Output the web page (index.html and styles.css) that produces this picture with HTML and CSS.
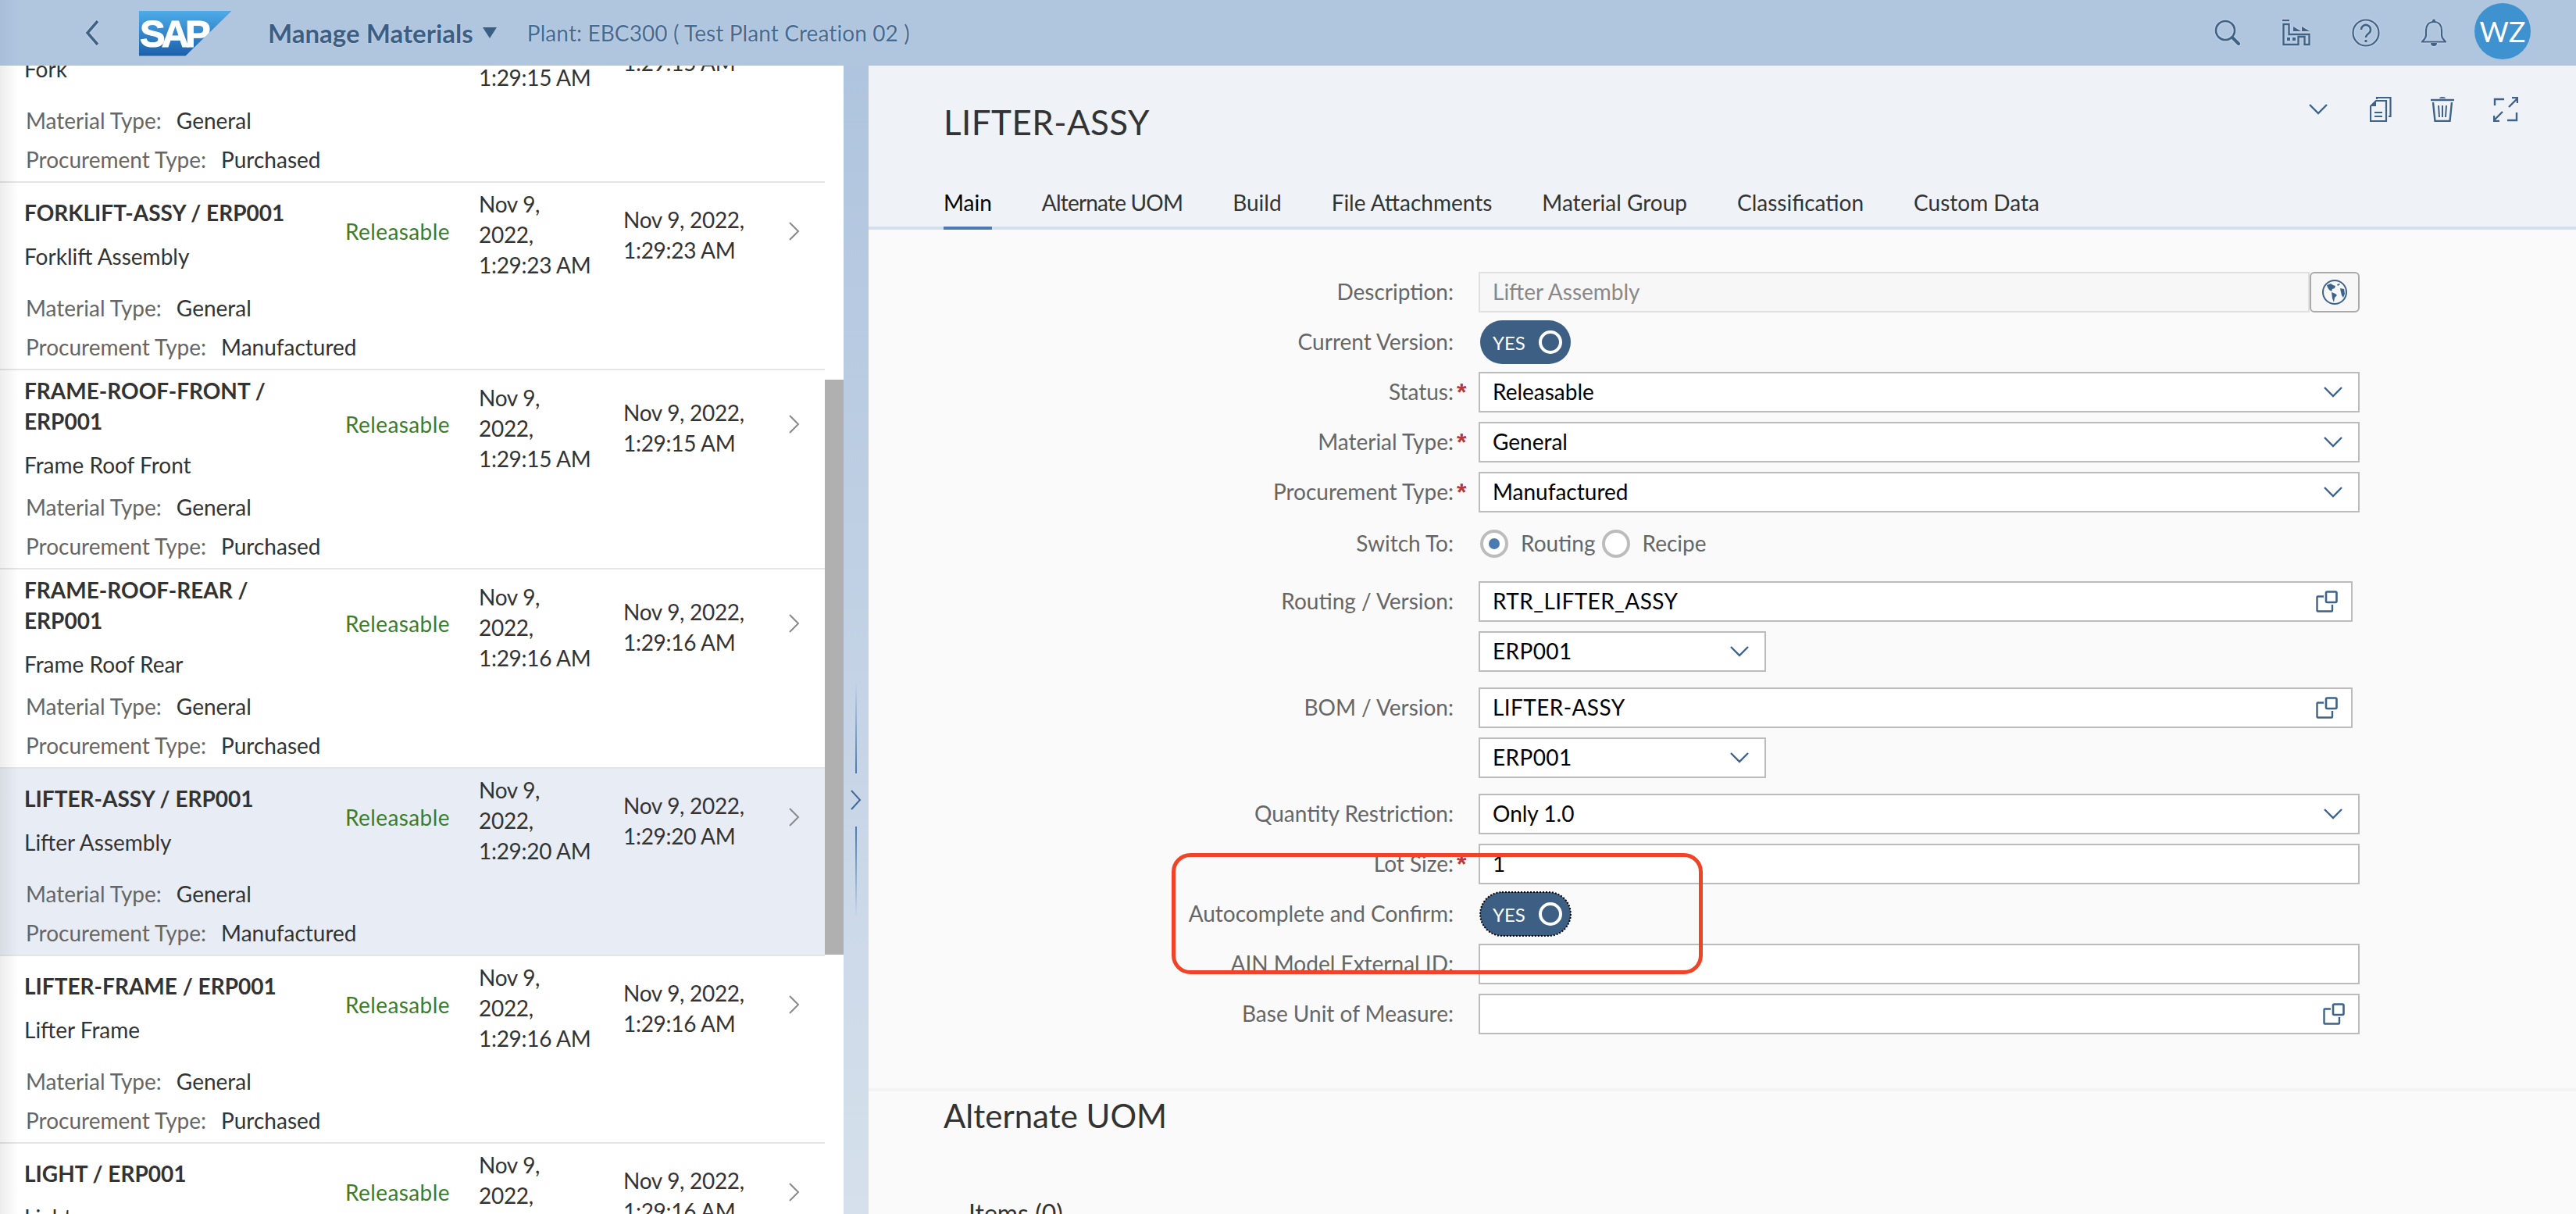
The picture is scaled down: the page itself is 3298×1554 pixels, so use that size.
FILE: index.html
```html
<!DOCTYPE html>
<html>
<head>
    <title>Manage Materials</title>
    <meta name="viewport" content="width=device-width, initial-scale=1.0">
    <link rel="stylesheet" href="styles.css">
</head>
<body>
    <svg class="defs" width="0" height="0">
        <symbol id="chev-down" viewBox="0 0 24 14"><path d="M1 1l11 11L23 1" fill="none" stroke="#3d638b" stroke-width="2.4"/></symbol>
        <symbol id="chev-right" viewBox="0 0 14 24"><path d="M1 1l11 11L1 23" fill="none" stroke="#8a8a8a" stroke-width="2"/></symbol>
        <symbol id="value-help" viewBox="0 0 28 28"><rect x="13" y="1.5" width="13.5" height="13.5" rx="1.5" fill="none" stroke="#3d638b" stroke-width="2.6"/><path d="M10 7.5H2.5a1 1 0 0 0-1 1V25.5a1 1 0 0 0 1 1H20a1 1 0 0 0 1-1V18" fill="none" stroke="#3d638b" stroke-width="2.4"/></symbol>
    </svg>

    <header class="shell">
        <svg class="back" width="20" height="32" viewBox="0 0 20 32"><path d="M17 1L4 16l13 15" fill="none" stroke="#3f6287" stroke-width="3.6"/></svg>
        <div class="logo"><span>SAP</span></div>
        <div class="app-title">Manage Materials</div>
        <div class="caret"></div>
        <div class="plant">Plant: EBC300 ( Test Plant Creation 02 )</div>
        <div class="shell-icons">
            <svg width="34" height="34" viewBox="0 0 34 34"><circle cx="14" cy="14" r="12" fill="none" stroke="#3f6287" stroke-width="2.6"/><path d="M23 23l8 8" stroke="#3f6287" stroke-width="4" stroke-linecap="round"/></svg>
            <svg width="36" height="34" viewBox="0 0 36 34"><path d="M0 1h9" stroke="#3f6287" stroke-width="2.4"/><path d="M1.5 6h7v13h26v13h-6V22h-8v10H1.5z" fill="none" stroke="#3f6287" stroke-width="2.4"/><path d="M14 9l10 6H14zM25 9l10 6H25z" fill="#3f6287"/><path d="M6 23h4v4H6zM13 23h4v4h-4z" fill="#3f6287"/></svg>
            <svg width="36" height="36" viewBox="0 0 36 36"><circle cx="18" cy="18" r="16.5" fill="none" stroke="#3f6287" stroke-width="2.2"/><path d="M12 14a6 6 0 1 1 9.5 4.8c-2 1.5-3.5 2.5-3.5 5.2" fill="none" stroke="#3f6287" stroke-width="2.6"/><circle cx="18" cy="28.5" r="1.8" fill="#3f6287"/></svg>
            <svg width="32" height="36" viewBox="0 0 32 36"><path d="M16 4c-7 0-10 5-10 11v6c0 4-3 6-5 8.5h30c-2-2.500-5-4.500-5-8.500v-6c0-6-3-11-10-11z" fill="none" stroke="#3f6287" stroke-width="2.2"/><circle cx="16" cy="2.5" r="2" fill="#3f6287"/><path d="M12 31h8a4 4 0 0 1-8 0z" fill="#3f6287"/></svg>
        </div>
        <div class="avatar">WZ</div>
    </header>

    <main class="layout">
        <section class="list">
            <div class="list-inner">
                <div class="row">
                    <div class="row-top">
                        <div class="cell-title"><div class="mat-id">FORK / ERP001</div><div class="mat-desc">Fork</div></div>
                        <div class="status">Releasable</div>
                        <div class="date">Nov 9,<br>2022,<br>1:29:15 AM</div>
                        <div class="date">Nov 9, 2022,<br>1:29:15 AM</div>
                        <svg class="row-chev" width="14" height="24"><use href="#chev-right"/></svg>
                    </div>
                    <div class="attr"><span class="attr-label">Material Type:</span>General</div>
                    <div class="attr"><span class="attr-label">Procurement Type:</span>Purchased</div>
                </div>
                <div class="row">
                    <div class="row-top">
                        <div class="cell-title"><div class="mat-id">FORKLIFT-ASSY / ERP001</div><div class="mat-desc">Forklift Assembly</div></div>
                        <div class="status">Releasable</div>
                        <div class="date">Nov 9,<br>2022,<br>1:29:23 AM</div>
                        <div class="date">Nov 9, 2022,<br>1:29:23 AM</div>
                        <svg class="row-chev" width="14" height="24"><use href="#chev-right"/></svg>
                    </div>
                    <div class="attr"><span class="attr-label">Material Type:</span>General</div>
                    <div class="attr"><span class="attr-label">Procurement Type:</span>Manufactured</div>
                </div>
                <div class="row tall">
                    <div class="row-top">
                        <div class="cell-title"><div class="mat-id">FRAME-ROOF-FRONT /<br>ERP001</div><div class="mat-desc">Frame Roof Front</div></div>
                        <div class="status">Releasable</div>
                        <div class="date">Nov 9,<br>2022,<br>1:29:15 AM</div>
                        <div class="date">Nov 9, 2022,<br>1:29:15 AM</div>
                        <svg class="row-chev" width="14" height="24"><use href="#chev-right"/></svg>
                    </div>
                    <div class="attr"><span class="attr-label">Material Type:</span>General</div>
                    <div class="attr"><span class="attr-label">Procurement Type:</span>Purchased</div>
                </div>
                <div class="row tall">
                    <div class="row-top">
                        <div class="cell-title"><div class="mat-id">FRAME-ROOF-REAR /<br>ERP001</div><div class="mat-desc">Frame Roof Rear</div></div>
                        <div class="status">Releasable</div>
                        <div class="date">Nov 9,<br>2022,<br>1:29:16 AM</div>
                        <div class="date">Nov 9, 2022,<br>1:29:16 AM</div>
                        <svg class="row-chev" width="14" height="24"><use href="#chev-right"/></svg>
                    </div>
                    <div class="attr"><span class="attr-label">Material Type:</span>General</div>
                    <div class="attr"><span class="attr-label">Procurement Type:</span>Purchased</div>
                </div>
                <div class="row selected">
                    <div class="row-top">
                        <div class="cell-title"><div class="mat-id">LIFTER-ASSY / ERP001</div><div class="mat-desc">Lifter Assembly</div></div>
                        <div class="status">Releasable</div>
                        <div class="date">Nov 9,<br>2022,<br>1:29:20 AM</div>
                        <div class="date">Nov 9, 2022,<br>1:29:20 AM</div>
                        <svg class="row-chev" width="14" height="24"><use href="#chev-right"/></svg>
                    </div>
                    <div class="attr"><span class="attr-label">Material Type:</span>General</div>
                    <div class="attr"><span class="attr-label">Procurement Type:</span>Manufactured</div>
                </div>
                <div class="row">
                    <div class="row-top">
                        <div class="cell-title"><div class="mat-id">LIFTER-FRAME / ERP001</div><div class="mat-desc">Lifter Frame</div></div>
                        <div class="status">Releasable</div>
                        <div class="date">Nov 9,<br>2022,<br>1:29:16 AM</div>
                        <div class="date">Nov 9, 2022,<br>1:29:16 AM</div>
                        <svg class="row-chev" width="14" height="24"><use href="#chev-right"/></svg>
                    </div>
                    <div class="attr"><span class="attr-label">Material Type:</span>General</div>
                    <div class="attr"><span class="attr-label">Procurement Type:</span>Purchased</div>
                </div>
                <div class="row">
                    <div class="row-top">
                        <div class="cell-title"><div class="mat-id">LIGHT / ERP001</div><div class="mat-desc">Light</div></div>
                        <div class="status">Releasable</div>
                        <div class="date">Nov 9,<br>2022,<br>1:29:16 AM</div>
                        <div class="date">Nov 9, 2022,<br>1:29:16 AM</div>
                        <svg class="row-chev" width="14" height="24"><use href="#chev-right"/></svg>
                    </div>
                    <div class="attr"><span class="attr-label">Material Type:</span>General</div>
                    <div class="attr"><span class="attr-label">Procurement Type:</span>Purchased</div>
                </div>
            </div>
        </section>

        <div class="scrollbar"><div class="thumb"></div></div>

        <div class="splitter">
            <div class="grip grip-up"></div>
            <svg class="grip-chev" width="14" height="26" viewBox="0 0 14 26"><path d="M1 1l11 12L1 25" fill="none" stroke="#3d6a9c" stroke-width="2"/></svg>
            <div class="grip grip-down"></div>
        </div>

        <section class="detail">
            <div class="detail-head">
                <div class="head-top">
                    <h1>LIFTER-ASSY</h1>
                    <div class="actions">
                        <svg width="24" height="14"><use href="#chev-down"/></svg>
                        <svg width="28" height="32" viewBox="0 0 28 32"><g fill="none" stroke="#3d638b" stroke-width="2.2"><path d="M9 3V1h17.5v24H24"/><path d="M8 5h13v26H1V12z"/></g><path d="M1 12l7-7v7z" fill="#3d638b"/><path d="M6 20h10M6 25h10" stroke="#3d638b" stroke-width="2.2"/></svg>
                        <svg width="30" height="32" viewBox="0 0 30 32"><path d="M0 4h30" stroke="#3d638b" stroke-width="2.4"/><path d="M11 2a4 2 0 0 1 8 0z" fill="#3d638b"/><path d="M3 7l2.5 24h19L27 7" fill="none" stroke="#3d638b" stroke-width="2.4"/><path d="M10 11l1 15M15 11v15M20 11l-1 15" stroke="#3d638b" stroke-width="2"/></svg>
                        <svg width="32" height="32" viewBox="0 0 32 32"><path d="M2 11V3h12M30 20v10H18" fill="none" stroke="#3d638b" stroke-width="2.4"/><path d="M20 13L31 2M24 1h7v7M12 19L1 30M8 31H1v-7" fill="none" stroke="#3d638b" stroke-width="2.4"/></svg>
                    </div>
                </div>
                <nav class="tabs">
                    <div class="tab active">Main</div>
                    <div class="tab tight">Alternate UOM</div>
                    <div class="tab">Build</div>
                    <div class="tab">File Attachments</div>
                    <div class="tab">Material Group</div>
                    <div class="tab">Classification</div>
                    <div class="tab">Custom Data</div>
                </nav>
            </div>

            <div class="form">
                <div class="form-row">
                    <label>Description:</label><i class="star"></i>
                    <div class="field disabled">Lifter Assembly</div>
                    <div class="globe-btn">
                        <svg width="32" height="32" viewBox="0 0 32 32"><circle cx="16" cy="16" r="15" fill="none" stroke="#3d638b" stroke-width="2"/><path d="M6 7l5-2 3 2 3 1-1 3-3 1-1 3-3-2-2-3zM12 16l5 2 2 2-3 3-1 6-2-5zM23 11l5 1 1 6-2 5-2-3-1-4zM19 6l3-1 1 1-3 2z" fill="#3d638b"/></svg>
                    </div>
                </div>
                <div class="form-row">
                    <label>Current Version:</label><i class="star"></i>
                    <div class="toggle"><span>YES</span><b></b></div>
                </div>
                <div class="form-row">
                    <label>Status:</label><i class="star">*</i>
                    <div class="field">Releasable<svg width="24" height="14"><use href="#chev-down"/></svg></div>
                </div>
                <div class="form-row">
                    <label>Material Type:</label><i class="star">*</i>
                    <div class="field">General<svg width="24" height="14"><use href="#chev-down"/></svg></div>
                </div>
                <div class="form-row">
                    <label>Procurement Type:</label><i class="star">*</i>
                    <div class="field">Manufactured<svg width="24" height="14"><use href="#chev-down"/></svg></div>
                </div>
                <div class="form-row switch-row">
                    <label>Switch To:</label><i class="star"></i>
                    <div class="radios">
                        <span class="radio on"></span><span class="radio-text">Routing</span>
                        <span class="radio"></span><span class="radio-text">Recipe</span>
                    </div>
                </div>
                <div class="form-row routing-row">
                    <label>Routing / Version:</label><i class="star"></i>
                    <div class="field short-end caps">RTR_LIFTER_ASSY<svg class="vh" width="28" height="28"><use href="#value-help"/></svg></div>
                </div>
                <div class="form-row">
                    <label></label><i class="star"></i>
                    <div class="field version caps">ERP001<svg width="24" height="14"><use href="#chev-down"/></svg></div>
                </div>
                <div class="form-row group">
                    <label>BOM / Version:</label><i class="star"></i>
                    <div class="field short-end caps">LIFTER-ASSY<svg class="vh" width="28" height="28"><use href="#value-help"/></svg></div>
                </div>
                <div class="form-row">
                    <label></label><i class="star"></i>
                    <div class="field version caps">ERP001<svg width="24" height="14"><use href="#chev-down"/></svg></div>
                </div>
                <div class="form-row group">
                    <label>Quantity Restriction:</label><i class="star"></i>
                    <div class="field">Only 1.0<svg width="24" height="14"><use href="#chev-down"/></svg></div>
                </div>
                <div class="form-row">
                    <label>Lot Size:</label><i class="star">*</i>
                    <div class="field">1</div>
                </div>
                <div class="form-row">
                    <label>Autocomplete and Confirm:</label><i class="star"></i>
                    <div class="toggle focused"><span>YES</span><b></b></div>
                </div>
                <div class="form-row">
                    <label>AIN Model External ID:</label><i class="star"></i>
                    <div class="field"></div>
                </div>
                <div class="form-row">
                    <label>Base Unit of Measure:</label><i class="star"></i>
                    <div class="field"><svg class="vh" width="28" height="28"><use href="#value-help"/></svg></div>
                </div>
                <div class="callout"></div>
            </div>

            <div class="section">
                <h2>Alternate UOM</h2>
                <h3>Items (0)</h3>
            </div>
        </section>
    </main>
</body>
</html>
```

FILE: styles.css
```css
* {
    box-sizing: border-box;
}

html, body {
    margin: 0;
    height: 100%;
    overflow: hidden;
}

body {
    font-family: "Lato", "Noto Sans", Arial, sans-serif;
    font-size: 28px;
    color: #333;
    background-color: #fff;
    display: flex;
    flex-direction: column;
}

.defs {
    display: block;
    height: 0;
}

/* shell bar */
.shell {
    height: 84px;
    flex: none;
    display: flex;
    align-items: center;
    background: linear-gradient(90deg, #a9bed8, #b0c5de 24px);
    color: #3b5f84;
    padding-left: 108px;
}

.shell svg {
    filter: drop-shadow(0 0 1px rgba(255, 255, 255, 0.7));
}

.back {
    flex: none;
}

.logo {
    width: 119px;
    height: 58px;
    margin-left: 50px;
    margin-top: 1px;
    background: linear-gradient(#4dace8, #1c5fab);
    clip-path: polygon(0 0, 100% 0, 50% 100%, 0 100%);
    color: #fff;
    font-family: "Liberation Sans", Arial, sans-serif;
    font-weight: 700;
    font-size: 49px;
    line-height: 58px;
    letter-spacing: -5px;
    -webkit-text-stroke: 1px #fff;
    padding-left: 1px;
}

.app-title {
    margin-left: 46px;
    font-size: 33px;
    font-weight: 700;
    text-shadow: 0 0 2px rgba(255, 255, 255, 0.6);
}

.caret {
    width: 0;
    height: 0;
    margin-left: 12px;
    border-left: 9px solid transparent;
    border-right: 9px solid transparent;
    border-top: 14px solid #3b5f84;
}

.plant {
    margin-left: 39px;
    font-size: 28px;
    letter-spacing: 0.1px;
    color: #466b91;
    text-shadow: 0 0 2px rgba(255, 255, 255, 0.6);
}

.shell-icons {
    margin-left: auto;
    display: flex;
    align-items: center;
    gap: 53px;
}

.avatar {
    width: 72px;
    height: 72px;
    margin: 0 58px 4px 36px;
    border-radius: 50%;
    background-color: #3f92d0;
    color: #fff;
    font-size: 36px;
    line-height: 72px;
    text-align: center;
}

/* main area */
.layout {
    flex: 1;
    min-height: 0;
    display: flex;
}

.list {
    width: 1056px;
    flex: none;
    overflow: hidden;
    position: relative;
}

.list::after {
    content: "";
    position: absolute;
    top: 0;
    bottom: 0;
    left: 0;
    width: 24px;
    background: linear-gradient(90deg, rgba(0, 0, 0, 0.07), rgba(0, 0, 0, 0));
}

.list-inner {
    margin-top: -90px;
}

.row {
    height: 240px;
    border-bottom: 2px solid #e5e5e5;
    display: flex;
    flex-direction: column;
}

.row.tall {
    height: 255px;
}

.row.selected {
    background-color: #e8edf5;
}

.row-top {
    flex: 1;
    display: flex;
    align-items: center;
    padding: 0 0 2px 31px;
}

.cell-title {
    width: 411px;
    line-height: 39px;
}

.mat-id {
    font-weight: 700;
}

.mat-desc {
    margin-top: 17px;
}

.status {
    width: 171px;
    color: #3a7d2e;
    margin-top: -10px;
    letter-spacing: 0.4px;
}

.date {
    width: 185px;
    line-height: 39px;
    letter-spacing: -0.3px;
}

.date + .date {
    width: 212px;
}

.row-chev {
    margin-top: -10px;
}

.attr {
    height: 50px;
    line-height: 50px;
    padding-left: 33px;
    flex: none;
}

.attr-label {
    color: #666;
    margin-right: 19px;
}

.attr:last-child {
    margin-bottom: 3px;
}

.scrollbar {
    width: 24px;
    flex: none;
    padding-top: 402px;
}

.thumb {
    height: 736px;
    background-color: #b0b0b0;
}

.splitter {
    width: 32px;
    flex: none;
    background: linear-gradient(#afc4de, #d6e0ec);
    display: flex;
    flex-direction: column;
    align-items: center;
    padding-top: 789px;
}

.grip {
    width: 2px;
    height: 117px;
}

.grip-up {
    background: linear-gradient(rgba(74, 123, 176, 0), #4a7bb0);
}

.grip-down {
    margin-top: 21px;
    background: linear-gradient(#4a7bb0, rgba(74, 123, 176, 0));
}

.grip-chev {
    margin-top: 21px;
    flex: none;
}

/* detail */
.detail {
    flex: 1;
    min-width: 0;
    background-color: #fafafa;
    overflow: hidden;
}

.detail-head {
    background-color: #eff3f8;
    border-bottom: 4px solid #d3e0ef;
}

.head-top {
    height: 132px;
    display: flex;
    justify-content: space-between;
    padding: 0 74px 0 96px;
}

h1 {
    margin: 44px 0 0;
    font-size: 44px;
    line-height: 56px;
    font-weight: 400;
    letter-spacing: 0.4px;
    color: #333;
}

.actions {
    margin-top: 40px;
    height: 32px;
    display: flex;
    align-items: center;
    gap: 50px;
}

.actions svg:first-child {
    margin-right: 4px;
}

.tabs {
    display: flex;
    gap: 64px;
    padding-left: 96px;
}

.tab {
    padding: 24px 0 11px;
    line-height: 39px;
    margin-bottom: -4px;
    border-bottom: 4px solid transparent;
    color: #333;
}

.tab.tight {
    letter-spacing: -0.8px;
}

.tab.active {
    color: #000;
    border-bottom-color: #4a7ab0;
}

.form {
    position: relative;
    padding: 54px 0 57px;
    border-bottom: 4px solid #f3f3f3;
}

.form-row {
    display: flex;
    align-items: center;
    height: 52px;
    margin-bottom: 12px;
}

.form-row.group {
    margin-top: 20px;
}

.switch-row {
    margin-top: 14px;
}

.routing-row {
    margin-top: 22px;
}

label {
    width: 749px;
    flex: none;
    text-align: right;
    color: #666;
    padding-bottom: 2px;
}

.star {
    width: 32px;
    flex: none;
    padding-left: 4px;
    font-family: "Liberation Sans", Arial, sans-serif;
    font-size: 32px;
    line-height: 32px;
    font-style: normal;
    font-weight: 700;
    color: #b33b3b;
}

.field {
    width: 1128px;
    height: 52px;
    display: flex;
    align-items: center;
    justify-content: space-between;
    padding: 0 20px 2px 16px;
    border: 2px solid #bcbcbc;
    background-color: #fff;
    color: #000;
}

.field.caps {
    letter-spacing: 0.4px;
}

.field > svg {
    margin-left: auto;
    margin-top: 2px;
}

.field > svg.vh {
    margin-right: -3px;
}

.field.disabled {
    width: 1064px;
    color: #888;
    background-color: #f7f7f7;
    border-color: #e0e0e0;
}

.field.short-end {
    width: 1119px;
}

.field.version {
    width: 368px;
}

.globe-btn {
    width: 64px;
    height: 52px;
    border: 2px solid #aaa;
    border-radius: 6px;
    background-color: #f7f7f7;
    display: flex;
    align-items: center;
    justify-content: center;
}

.toggle {
    width: 116px;
    height: 56px;
    margin-left: 2px;
    border-radius: 28px;
    background-color: #3d5f83;
    color: #fff;
    font-size: 24px;
    display: flex;
    align-items: center;
    justify-content: space-between;
    padding: 0 11px 0 16px;
}

.toggle b {
    width: 30px;
    height: 30px;
    border: 4px solid #fff;
    border-radius: 50%;
}

.toggle.focused {
    outline: 2px dotted #000;
    outline-offset: -1px;
}

.radios {
    display: flex;
    align-items: center;
}

.radio {
    width: 36px;
    height: 36px;
    margin-left: 2px;
    border: 4px solid #bcbcbc;
    border-radius: 50%;
    background-color: #fff;
    display: flex;
    align-items: center;
    justify-content: center;
}

.radio.on::before {
    content: "";
    width: 14px;
    height: 14px;
    border-radius: 50%;
    background-color: #4a7bb0;
}

.radio-text {
    margin: 0 6px 0 16px;
    color: #666;
    padding-bottom: 2px;
}

.callout {
    position: absolute;
    left: 388px;
    top: 798px;
    width: 680px;
    height: 155px;
    border: 5px solid #f04428;
    border-radius: 24px;
}

.section {
    padding: 3px 0 0 96px;
}

h2 {
    margin: 0;
    font-size: 42px;
    line-height: 56px;
    font-weight: 400;
    color: #333;
}

h3 {
    margin: 75px 0 0 32px;
    font-size: 32px;
    line-height: 44px;
    font-weight: 400;
    color: #333;
}
```
